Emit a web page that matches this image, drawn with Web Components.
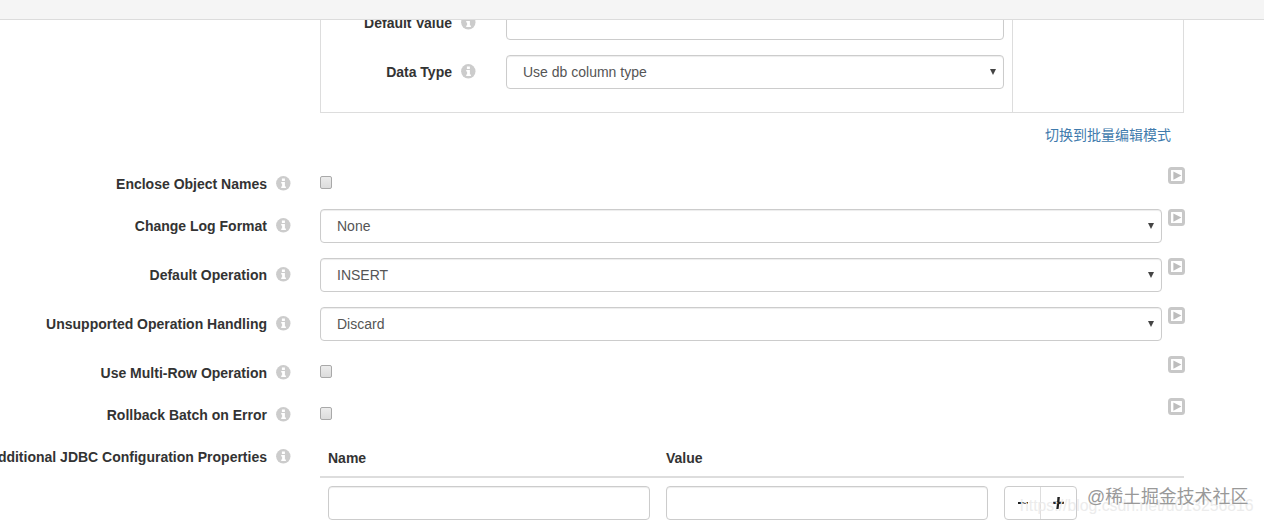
<!DOCTYPE html>
<html><head><meta charset="utf-8">
<style>
html,body{margin:0;padding:0;height:523px;overflow:hidden;background:#fff;font:14px/20px "Liberation Sans",Arial,"Noto Sans CJK SC",sans-serif;color:#333}
</style></head><body>
<template id="t-info"><style>:host{display:inline-flex;width:15px;height:15px;flex:none}svg{display:block}</style>
<svg width="15" height="15" viewBox="0 0 15 15"><circle cx="7.3" cy="7.3" r="7.2" fill="#ccc"/><rect x="5.9" y="2.5" width="3" height="2.5" fill="#fff"/><path d="M5.2 6H8.9V10.6H9.9V12.1H5.2V10.6H6.1V7.5H5.2Z" fill="#fff"/></svg></template>
<template id="t-play"><style>:host{display:block;width:18px;height:18px}svg{display:block}</style>
<svg width="18" height="18" viewBox="0 0 18 18"><rect x="1.5" y="1.5" width="14" height="14" rx="2" fill="#fff" stroke="#c8c8c8" stroke-width="3"/><path d="M5.4 4.6L13.4 8.6L5.4 12.8Z" fill="#bdbdbd"/></svg></template>
<template id="t-select"><style>:host{display:flex;align-items:center;box-sizing:border-box;height:34px;border:1px solid #ccc;border-radius:4px;background:#fff;box-shadow:inset 0 1px 1px rgba(0,0,0,.075);padding:0 7px 0 16px;color:#555;font-size:14px;flex:1;min-width:0}
span{flex:1}i{width:0;height:0;border-left:3.5px solid transparent;border-right:3.5px solid transparent;border-top:6px solid #444}</style><span><slot></slot></span><i></i></template>
<template id="t-input"><style>:host{display:block;flex:none;width:var(--w,100%);height:34px}input{display:block;box-sizing:border-box;width:100%;height:100%;margin:0;border:1px solid #ccc;border-radius:4px;background:#fff;box-shadow:inset 0 1px 1px rgba(0,0,0,.075);outline:0}</style><input type="text"></template>
<template id="t-check"><style>:host{display:block;box-sizing:border-box;width:12px;height:13px;margin-top:9px;border:1px solid #a9a9a9;border-radius:2px;background:linear-gradient(#ececec,#dcdcdc)}</style></template>
<template id="t-label"><style>:host{display:flex;justify-content:flex-end;align-items:flex-start;flex:none;width:var(--lw,291px);white-space:nowrap;font-weight:700;font-size:14px;line-height:20px;color:#333}
.t{padding-top:7px}x-info{margin:9px 0 0 9px}</style><span class="t"><slot></slot></span><x-info></x-info></template>
<template id="t-row"><style>:host{display:flex;min-height:var(--h,34px);margin-bottom:15px}
.c{display:flex;flex:none;width:842px;margin-left:29px}x-play{margin-left:6px}</style>
<x-label><slot name="label"></slot></x-label><div class="c"><slot></slot></div><x-play></x-play></template>
<template id="t-header"><style>:host{display:block;position:relative;z-index:2;height:19px;background:#f5f5f5;border-bottom:1px solid #dcdcdc}</style></template>
<template id="t-panel"><style>:host{display:flex;box-sizing:border-box;margin:-15px 80px 0 320px;width:864px;height:108px;border:1px solid #ddd}
.l{flex:none;box-sizing:border-box;width:691px;padding-right:8px}.r{flex:1;border-left:1px solid #ddd}
</style><div class="l"><slot></slot></div><div class="r"></div></template>
<template id="t-prow"><style>:host{display:flex;margin-bottom:15px;--lw:155px}.c{display:flex;flex:1;margin-left:30px}</style><x-label><slot name="label"></slot></x-label><div class="c"><slot></slot></div></template>
<template id="t-props"><style>:host{display:block;margin-left:29px;width:864px}
.head{display:flex;height:38px;box-sizing:border-box;border-bottom:2px solid #ddd;padding:8px 0 0 8px;font-weight:700;font-size:14px;line-height:20px}
.head span{width:338px}.body{display:flex;gap:16px;padding:8px 0 0 8px}</style><div class="head"><span>Name</span><span>Value</span></div><div class="body"><x-input style="--w:322px"></x-input><x-input style="--w:322px"></x-input><x-stepper></x-stepper></div></template>
<template id="t-stepper"><style>:host{display:flex;width:73px;height:34px;box-sizing:border-box;border:1px solid #ccc;border-radius:4px;background:#fff;flex:none}
div{flex:1;display:flex;align-items:center;justify-content:center}div+div{border-left:1px solid #ddd}svg{display:block}</style>
<div><svg width="10" height="2" viewBox="0 0 10 2"><rect width="10" height="2" fill="#222"/></svg></div><div><svg width="11" height="12" viewBox="0 0 11 12"><path d="M4.4 0H6.9L6.4 4.7H11L10.7 6.9H6.2L5.6 12H3.3L3.9 6.9H0L.3 4.7H4.1Z" fill="#222"/></svg></div></template>
<template id="t-mark"><style>:host{display:block;position:absolute;left:0;top:0;width:1264px;height:523px;pointer-events:none;overflow:hidden;z-index:3}
.a{position:absolute;left:1087px;top:485px;font-size:17.9px;line-height:24px;color:#999;white-space:nowrap}
.b{position:absolute;left:1020px;top:496px;font-size:15.8px;line-height:20px;color:#ececec;white-space:nowrap}</style><div class="b">https://blog.csdn.net/u013256816</div><div class="a">@稀土掘金技术社区</div></template>
<template id="t-link"><style>:host{display:flex;justify-content:flex-end;margin:12px 93px 22px 0;height:20px;font-size:14px;line-height:20px;color:#3f7bad}</style><slot></slot></template>
<script>
const defs={'x-info':'t-info','x-play':'t-play','x-select':'t-select','x-input':'t-input','x-check':'t-check','x-label':'t-label','x-row':'t-row','x-header':'t-header','x-panel':'t-panel','x-prow':'t-prow','x-props':'t-props','x-stepper':'t-stepper','x-mark':'t-mark','x-link':'t-link'};
for(const[n,t]of Object.entries(defs)){customElements.define(n,class extends HTMLElement{constructor(){super();this.attachShadow({mode:'open'}).appendChild(document.getElementById(t).content.cloneNode(true));}});}
</script>
<x-header></x-header>
<x-panel>
<x-prow><span slot="label">Default Value</span><x-input></x-input></x-prow>
<x-prow><span slot="label">Data Type</span><x-select>Use db column type</x-select></x-prow>
</x-panel>
<x-link>切换到批量编辑模式</x-link>
<x-row style="--h:27px"><span slot="label">Enclose Object Names</span><x-check></x-check></x-row>
<x-row><span slot="label">Change Log Format</span><x-select>None</x-select></x-row>
<x-row><span slot="label">Default Operation</span><x-select>INSERT</x-select></x-row>
<x-row><span slot="label">Unsupported Operation Handling</span><x-select>Discard</x-select></x-row>
<x-row style="--h:27px"><span slot="label">Use Multi-Row Operation</span><x-check></x-check></x-row>
<x-row style="--h:27px"><span slot="label">Rollback Batch on Error</span><x-check></x-check></x-row>
<div style="display:flex"><x-label>Additional JDBC Configuration Properties</x-label><x-props></x-props></div>
<x-mark></x-mark>
</body></html>
